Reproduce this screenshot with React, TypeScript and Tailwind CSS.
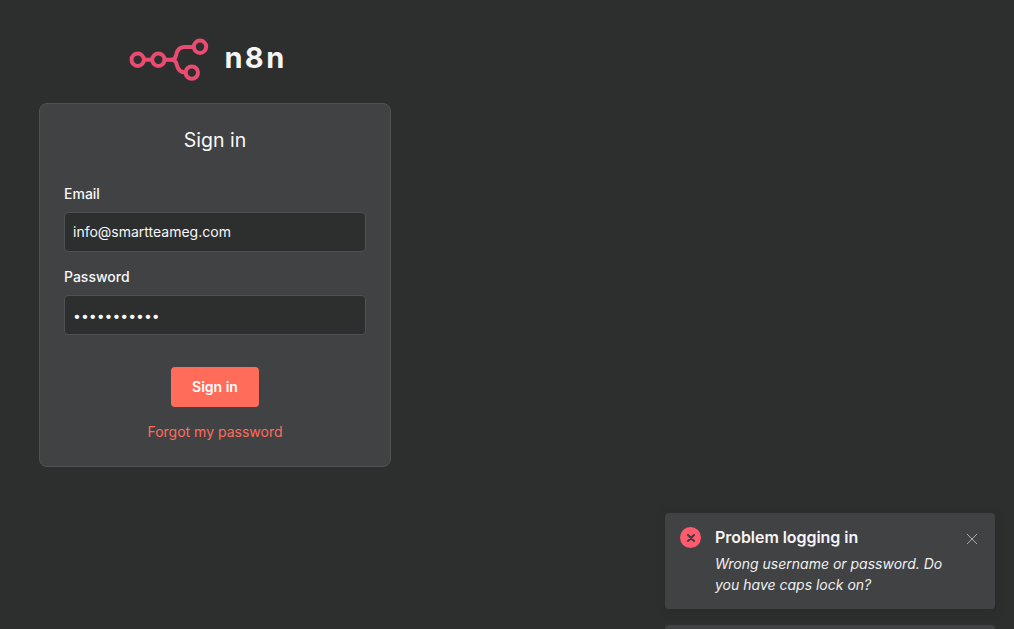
import React from "react";

function Logo() {
  return (
    <svg width="84" height="44" viewBox="128 36 84 44" fill="none" stroke="#ea4b71" strokeWidth="4" strokeLinecap="round">
      <circle cx="137.7" cy="58.7" r="6.2" />
      <circle cx="158.4" cy="58.7" r="6.2" />
      <circle cx="200" cy="45.8" r="6.2" />
      <circle cx="191.8" cy="71.6" r="6.2" />
      <path d="M144 58.7H152M164.6 58.7H171.5C174.5 58.7 175.5 57 176 54.5C177 49.5 179 46 184 46H193.8" />
      <path d="M171.5 58.7C175 58.7 176 60.5 176.7 63.5C177.7 68.5 180 71.6 185.6 71.6" />
    </svg>
  );
}

export default function App() {
  const inputBase =
    "h-10 w-full rounded-[4px] border border-[#505154] bg-[#2d2e2e] px-2 text-[14px] text-[#f8f8f8] outline-none";
  const labelBase = "text-[14px] leading-[18px] font-medium text-[#f8f8f8] mb-[9px]";
  return (
    <div className="relative h-screen w-full overflow-hidden bg-[#2d2e2e] font-['Inter',sans-serif]">
      <div className="ml-[39px] w-[352px] flex flex-col">
        <div className="flex h-[103px] items-center justify-center pt-[14px] pr-[15px]">
          <Logo />
          <span className="mb-[3px] ml-[12px] text-[29px] leading-none font-bold tracking-[2.4px] text-[#f5f5f5]">n8n</span>
        </div>
        <div className="flex h-[364px] flex-col rounded-[8px] border border-[#505154] bg-[#414244] px-6 pt-6">
          <h1 className="text-center text-[19.5px] leading-[24px] font-normal text-[#f8f8f8]">Sign in</h1>
          <div className="mt-[33px] flex flex-col gap-[16px]">
            <div className="flex flex-col">
              <label className={labelBase}>Email</label>
              <input readOnly type="text" value="info@smartteameg.com" className={inputBase + " pb-[2px]"} />
            </div>
            <div className="flex flex-col">
              <label className={labelBase}>Password</label>
              <input readOnly type="password" value="abcdefghijk" className={inputBase} />
            </div>
          </div>
          <button className="mx-auto mt-8 h-10 w-[88px] rounded-[4px] bg-[#ff6d5a] pb-[2px] text-[14px] font-semibold text-white">
            Sign in
          </button>
          <a className="mt-4 text-center text-[14px] leading-[18px] text-[#ff6d5a]">Forgot my password</a>
        </div>
      </div>

      <div className="absolute right-[19px] top-[513px] flex w-[330px] flex-col gap-4">
        <div className="flex h-[96px] rounded-[4px] bg-[#414244] pl-[15px] pr-[17px] pt-[14px] shadow-[0_2px_12px_rgba(0,0,0,0.1)]">
          <div className="mr-[14px] flex h-[21px] w-[21px] shrink-0 items-center justify-center rounded-full bg-[#ff5a6e]">
            <svg width="10" height="10" viewBox="0 0 10 10" stroke="#3a3b3d" strokeWidth="2" strokeLinecap="round">
              <path d="M2 2L8 8M8 2L2 8" />
            </svg>
          </div>
          <div className="flex-1">
            <div className="-mt-px text-[16px] leading-[22px] font-semibold tracking-[-0.05px] text-[#f5f5f5]">Problem logging in</div>
            <p className="mt-[5px] text-[14px] leading-[21px] italic text-[#f0f0f0]">
              Wrong username or password. Do you have caps lock on?
            </p>
          </div>
          <svg className="mt-[6px] ml-2 shrink-0" width="12" height="12" viewBox="0 0 12 12" stroke="#a9aaab" strokeWidth="1" fill="none">
            <path d="M1 1L11 11M11 1L1 11" />
          </svg>
        </div>
        <div className="h-[96px] rounded-[4px] bg-[#414244]" />
      </div>
    </div>
  );
}
